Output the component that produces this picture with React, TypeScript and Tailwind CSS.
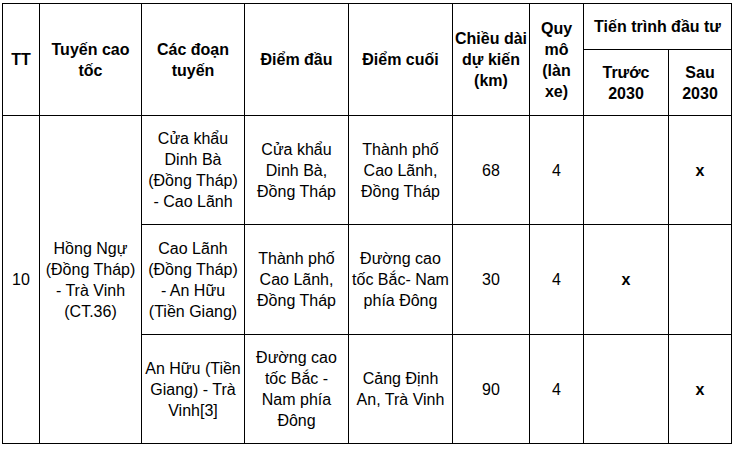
const rows = [
  {
    segment: ["Cửa khẩu", "Dinh Bà", "(Đồng Tháp)", "- Cao Lãnh"],
    start: ["Cửa khẩu", "Dinh Bà,", "Đồng Tháp"],
    end: ["Thành phố", "Cao Lãnh,", "Đồng Tháp"],
    length: "68",
    lanes: "4",
    before: false,
    h: "h-[109px]",
  },
  {
    segment: ["Cao Lãnh", "(Đồng Tháp)", "- An Hữu", "(Tiền Giang)"],
    start: ["Thành phố", "Cao Lãnh,", "Đồng Tháp"],
    end: ["Đường cao", "tốc Bắc- Nam", "phía Đông"],
    length: "30",
    lanes: "4",
    before: true,
    h: "h-[110px]",
  },
  {
    segment: ["An Hữu (Tiền", "Giang) - Trà", "Vinh[3]"],
    start: ["Đường cao", "tốc Bắc -", "Nam phía", "Đông"],
    end: ["Cảng Định", "An, Trà Vinh"],
    length: "90",
    lanes: "4",
    before: false,
    h: "h-[109px]",
  },
];

function Lines({ lines }: { lines: string[] }) {
  return (
    <>
      {lines.map((l, i) => (
        <span key={i} className="block whitespace-nowrap">
          {l}
        </span>
      ))}
    </>
  );
}

const cell = "border border-black text-center align-middle px-0";

export default function App() {
  return (
    <div className="min-h-[450px] bg-white pl-[2px] pt-[3px] font-['Liberation_Sans',Arial,sans-serif] text-[16px] leading-[21px] text-black">
      <table className="table-fixed border-collapse w-[729px]">
        <colgroup>
          <col className="w-[37px]" />
          <col className="w-[102px]" />
          <col className="w-[103px]" />
          <col className="w-[104px]" />
          <col className="w-[104px]" />
          <col className="w-[77px]" />
          <col className="w-[54px]" />
          <col className="w-[85px]" />
          <col className="w-[63px]" />
        </colgroup>
        <thead className="font-bold">
          <tr className="h-[46px]">
            <th rowSpan={2} className={cell}>TT</th>
            <th rowSpan={2} className={cell}>
              <Lines lines={["Tuyến cao", "tốc"]} />
            </th>
            <th rowSpan={2} className={cell}>
              <Lines lines={["Các đoạn", "tuyến"]} />
            </th>
            <th rowSpan={2} className={cell}>Điểm đầu</th>
            <th rowSpan={2} className={cell}>Điểm cuối</th>
            <th rowSpan={2} className={cell}>
              <Lines lines={["Chiều dài", "dự kiến", "(km)"]} />
            </th>
            <th rowSpan={2} className={cell}>
              <Lines lines={["Quy", "mô", "(làn", "xe)"]} />
            </th>
            <th colSpan={2} className={cell}>Tiến trình đầu tư</th>
          </tr>
          <tr className="h-[66px]">
            <th className={cell}>
              <Lines lines={["Trước", "2030"]} />
            </th>
            <th className={cell}>
              <Lines lines={["Sau", "2030"]} />
            </th>
          </tr>
        </thead>
        <tbody>
          {rows.map((r, i) => (
            <tr key={i} className={r.h}>
              {i === 0 && (
                <>
                  <td rowSpan={3} className={cell}>10</td>
                  <td rowSpan={3} className={cell}>
                    <Lines lines={["Hồng Ngự", "(Đồng Tháp)", "- Trà Vinh", "(CT.36)"]} />
                  </td>
                </>
              )}
              <td className={cell}>
                <Lines lines={r.segment} />
              </td>
              <td className={cell}>
                <Lines lines={r.start} />
              </td>
              <td className={cell}>
                <Lines lines={r.end} />
              </td>
              <td className={cell}>{r.length}</td>
              <td className={cell}>{r.lanes}</td>
              <td className={cell + " font-bold"}>{r.before ? "x" : ""}</td>
              <td className={cell + " font-bold"}>{r.before ? "" : "x"}</td>
            </tr>
          ))}
        </tbody>
      </table>
    </div>
  );
}
